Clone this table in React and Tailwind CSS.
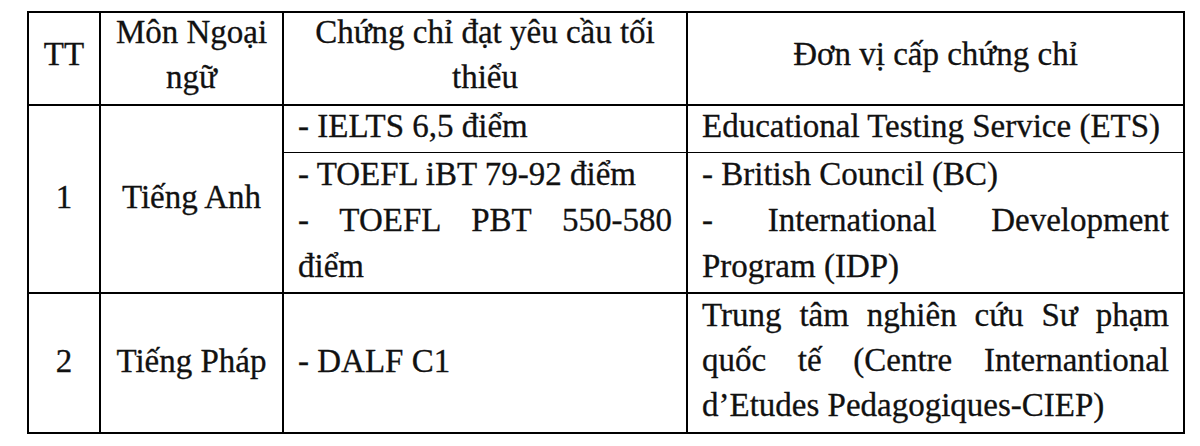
const cell = 'border-2 border-black p-0'

// one line of a cell; "full" stretches the words to both edges like Word's justify
function Line({ children, full }) {
  return (
    <div className={`whitespace-nowrap ${full ? '[text-align-last:justify]' : ''}`}>{children}</div>
  )
}

export default function App() {
  return (
    <div className="w-[1200px] h-[446px] bg-white pt-[11px] pl-[27px] text-[#111] [-webkit-text-stroke:0.3px_#111] font-['Liberation_Serif','DejaVu_Serif',serif]">
      <table className="table-fixed border-collapse w-[1156px] text-[33px] leading-[45px]">
        <colgroup>
          <col className="w-[72px]" />
          <col className="w-[183px]" />
          <col className="w-[404px]" />
          <col className="w-[497px]" />
        </colgroup>
        <tbody>
          {/* header */}
          <tr className="h-[93px]">
            <td className={`${cell} text-center align-middle`}>
              <div className="-mt-[8px]">TT</div>
            </td>
            <td className={`${cell} text-center align-middle`}>
              <div className="-mt-[8px]">Môn Ngoại<br />ngữ</div>
            </td>
            <td className={`${cell} text-center align-middle`}>
              <div className="-mt-[8px]">Chứng chỉ đạt yêu cầu tối<br />thiểu</div>
            </td>
            <td className={`${cell} text-center align-middle`}>
              <div className="-mt-[8px]">Đơn vị cấp chứng chỉ</div>
            </td>
          </tr>

          {/* Tiếng Anh */}
          <tr className="h-[47px]">
            <td rowSpan={2} className={`${cell} text-center align-middle`}>
              <div className="-mt-[4px]">1</div>
            </td>
            <td rowSpan={2} className={`${cell} text-center align-middle`}>
              <div className="-mt-[4px]">Tiếng Anh</div>
            </td>
            <td className={`${cell} border-b-[1px] px-[14px] align-middle leading-[44px]`}>
              <div className="-mt-[6px]">- IELTS 6,5 điểm</div>
            </td>
            <td className={`${cell} border-b-[1px] px-[14px] align-middle leading-[44px]`}>
              <div className="-mt-[6px]">Educational Testing Service (ETS)</div>
            </td>
          </tr>
          <tr className="h-[141px]">
            <td className={`${cell} border-t-[1px] px-[14px] align-top leading-[46px]`}>
              <div className="-mt-[2px]">
                <Line>- TOEFL iBT 79-92 điểm</Line>
                <Line full>- TOEFL PBT 550-580</Line>
                <Line>điểm</Line>
              </div>
            </td>
            <td className={`${cell} border-t-[1px] px-[14px] align-top leading-[46px]`}>
              <div className="-mt-[2px]">
                <Line>- British Council (BC)</Line>
                <Line full>- International Development</Line>
                <Line>Program (IDP)</Line>
              </div>
            </td>
          </tr>

          {/* Tiếng Pháp */}
          <tr className="h-[140px]">
            <td className={`${cell} text-center align-middle`}>
              <div className="-mt-[4px]">2</div>
            </td>
            <td className={`${cell} text-center align-middle`}>
              <div className="-mt-[4px]">Tiếng Pháp</div>
            </td>
            <td className={`${cell} px-[14px] align-middle`}>
              <div className="-mt-[4px]">- DALF C1</div>
            </td>
            <td className={`${cell} px-[14px] align-top leading-[45px]`}>
              <div className="-mt-[1px]">
                <Line full>Trung tâm nghiên cứu Sư phạm</Line>
                <Line full>quốc tế (Centre Internantional</Line>
                <Line>d’Etudes Pedagogiques-CIEP)</Line>
              </div>
            </td>
          </tr>
        </tbody>
      </table>
    </div>
  )
}
